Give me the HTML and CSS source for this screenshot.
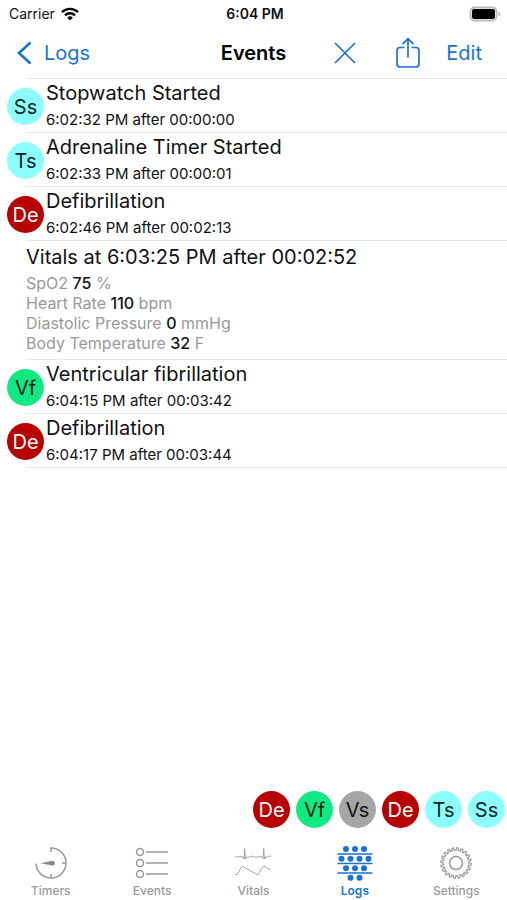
FILE: index.html
```html
<!DOCTYPE html>
<html lang="en">
<head>
<meta charset="utf-8">
<meta name="viewport" content="width=device-width, initial-scale=1">
<title>Events</title>
<link rel="stylesheet" href="styles.css">
</head>
<body>
<div class="status">
  <div class="status-left">
    <span>Carrier</span>
    <svg width="18" height="14" viewBox="0 0 18 14" fill="none" stroke="#000" stroke-width="2.4"><path d="M1 5.2a11.3 11.3 0 0 1 16 0"/><path d="M4 8.3a7 7 0 0 1 10 0"/><path d="M9 13.6 6.2 10.7a4 4 0 0 1 5.6 0z" fill="#000" stroke="none"/></svg>
  </div>
  <time class="status-time">6:04 PM</time>
  <svg class="battery" width="32" height="16" viewBox="0 0 32 16"><rect x="1.5" y="1.5" width="26" height="13" rx="4" fill="#fff" stroke="#bcbcbc" stroke-width="1.8"/><rect x="3" y="3" width="23" height="10" rx="2" fill="#000"/><path d="M29.4 5.5q1.800.8 1.800 2.500t-1.800 2.500z" fill="#bcbcbc"/></svg>
</div>
<header class="nav">
  <a class="back" href="#logs">
    <svg width="16" height="24" viewBox="0 0 16 24" fill="none" stroke="currentColor" stroke-width="2.6"><path d="M14.500 1.500 3 12l11.500 10.500"/></svg>
    <span>Logs</span>
  </a>
  <h1>Events</h1>
  <div class="actions">
    <button type="button" class="close" aria-label="Close"><svg width="22" height="22" viewBox="0 0 22 22" fill="none" stroke="currentColor" stroke-width="1.7"><path d="M1 1l20 20M21 1 1 21"/></svg></button>
    <button type="button" aria-label="Share"><svg width="26" height="32" viewBox="0 0 26 32" fill="none" stroke="currentColor" stroke-width="1.7"><path d="M9.5 10.5H5a3 3 0 0 0-3 3V27a3 3 0 0 0 3 3h16a3 3 0 0 0 3-3V13.5a3 3 0 0 0-3-3h-4.500M13 20.500V2M7.500 7.200 13 1.700l5.500 5.500"/></svg></button>
    <button type="button">Edit</button>
  </div>
</header>
<main>
  <ul class="log">
    <li class="event"><span class="badge cyan">Ss</span><div><h2>Stopwatch Started</h2><p>6:02:32 PM after 00:00:00</p></div></li>
    <li class="event"><span class="badge cyan">Ts</span><div><h2>Adrenaline Timer Started</h2><p>6:02:33 PM after 00:00:01</p></div></li>
    <li class="event"><span class="badge red">De</span><div><h2>Defibrillation</h2><p>6:02:46 PM after 00:02:13</p></div></li>
    <li class="vitals">
      <h2>Vitals at 6:03:25 PM after 00:02:52</h2>
      <p>SpO2 <b>75</b> %</p>
      <p>Heart Rate <b>110</b> bpm</p>
      <p>Diastolic Pressure <b>0</b> mmHg</p>
      <p>Body Temperature <b>32</b> F</p>
    </li>
    <li class="event"><span class="badge green">Vf</span><div><h2>Ventricular fibrillation</h2><p>6:04:15 PM after 00:03:42</p></div></li>
    <li class="event"><span class="badge red">De</span><div><h2>Defibrillation</h2><p>6:04:17 PM after 00:03:44</p></div></li>
  </ul>
</main>
<div class="quick">
  <button type="button" class="badge red">De</button>
  <button type="button" class="badge green">Vf</button>
  <button type="button" class="badge gray">Vs</button>
  <button type="button" class="badge red">De</button>
  <button type="button" class="badge cyan">Ts</button>
  <button type="button" class="badge cyan">Ss</button>
</div>
<nav class="tabs">
  <a href="#timers">
    <svg width="36" height="36" viewBox="0 0 36 36" fill="none" stroke="currentColor" stroke-width="1.5"><path d="M18 7V3a15 15 0 1 1-15 15.500M33 18h-4M18 33v-4"/><path d="M7.500 18.200 19.500 15.700q2.500.2 2.500 2.400t-2.500 2.400z" fill="#888" stroke="none"/></svg>
    <span>Timers</span>
  </a>
  <a href="#events">
    <svg width="36" height="36" viewBox="0 0 36 36" fill="none" stroke="currentColor" stroke-width="1.5"><circle cx="6" cy="7" r="3.500"/><circle cx="6" cy="18" r="3.500"/><circle cx="6" cy="29" r="3.500"/><path d="M12 7h22M12 18h22M12 29h22"/></svg>
    <span>Events</span>
  </a>
  <a href="#vitals">
    <svg width="36" height="36" viewBox="0 0 36 36" fill="none" stroke="currentColor" stroke-width=".9"><path d="M0 12h3l2-.8 2 .8h1l1 2 .7-10.500L10.500 14l1-2h3l2-1 2 1h5l2-.8 1.500.8 1 2 .7-10.500L29.500 14l1-2h2l2-1 1.500.5"/><path d="M0 29.500h2q1 0 2-3 2-5 3.500-5t3 1.500L22 29.500q1.500.5 2.500-2 2.500-6 4.500-6t3 1.500l4 2"/></svg>
    <span>Vitals</span>
  </a>
  <a href="#logs" class="active" aria-current="page">
    <svg width="36" height="36" viewBox="0 0 36 36" fill="currentColor"><path d="M.5 9h35M.5 18.500h35M.5 28h35" stroke="currentColor" stroke-width="1.300"/><circle cx="9" cy="4" r="3"/><circle cx="18" cy="4" r="3"/><circle cx="27" cy="4" r="3"/><circle cx="4.500" cy="13.700" r="3"/><circle cx="13.500" cy="13.700" r="3"/><circle cx="22.500" cy="13.700" r="3"/><circle cx="31.500" cy="13.700" r="3"/><circle cx="9" cy="23.200" r="3"/><circle cx="18" cy="23.200" r="3"/><circle cx="27" cy="23.200" r="3"/><circle cx="13.500" cy="32.800" r="3"/><circle cx="22.500" cy="32.800" r="3"/></svg>
    <span>Logs</span>
  </a>
  <a href="#settings">
    <svg width="36" height="36" viewBox="0 0 36 36" fill="none" stroke="currentColor"><circle cx="18" cy="18" r="14" stroke-width="3.600" pathLength="200" stroke-dasharray="6.500 3.500"/><circle cx="18" cy="18" r="13" stroke-width="1.500"/><circle cx="18" cy="18" r="13.200" stroke="#fff" stroke-width="2.600" pathLength="200" stroke-dasharray="2.500 7.500" stroke-dashoffset="-2"/><circle cx="18" cy="18" r="6.500" stroke-width="1.500"/></svg>
    <span>Settings</span>
  </a>
</nav>
</body>
</html>
```
FILE: styles.css
```css
* { box-sizing: border-box; }

body {
  margin: 0;
  min-height: 100vh;
  display: flex;
  flex-direction: column;
  background: #fff;
  color: #111;
  font-family: Inter, "Liberation Sans", sans-serif;
}

h1, h2, p, ul { margin: 0; padding: 0; }
ul { list-style: none; }
a { color: inherit; text-decoration: none; }

button {
  padding: 0;
  border: 0;
  background: none;
  color: inherit;
  font: inherit;
}

svg { display: block; }

.status {
  display: grid;
  grid-template-columns: 1fr auto 1fr;
  align-items: center;
  height: 27px;
  padding: 0 6px 0 9px;
  font-size: 14px;
}

.status-left {
  display: flex;
  align-items: center;
  gap: 6px;
}

.status-time { font-weight: 600; }
.battery { justify-self: end; }

.nav {
  display: grid;
  grid-template-columns: 1fr auto 1fr;
  align-items: center;
  height: 51px;
  padding: 0 16px;
  color: #1a73d2;
  font-size: 20px;
}

.nav h1 {
  color: #000;
  font-size: 20px;
  font-weight: 600;
}

.back {
  display: flex;
  align-items: center;
  gap: 12px;
}

.actions {
  display: flex;
  justify-content: flex-end;
  align-items: center;
  gap: 25px;
  padding-right: 9px;
}

.close { margin-right: 14px; }

main { flex: 1; }

.log::before,
.log li::after {
  content: "";
  display: block;
  height: 1px;
  margin-left: 26px;
  background: #e8e8e8;
}

.event {
  display: grid;
  grid-template-columns: auto 1fr;
  column-gap: 2px;
  align-items: center;
}

.event .badge { margin: 2px 0 0 7px; }
.event::after { grid-column: 1 / -1; }

.log h2 {
  font-size: 20px;
  font-weight: 400;
  line-height: 28px;
}

.event p {
  font-size: 15px;
  line-height: 25px;
}

.vitals h2,
.vitals p { padding-left: 26px; }

.vitals { padding-top: 2px; }
.vitals h2 { margin-bottom: 2px; }
.vitals::after { margin-top: 6px; }

.vitals p {
  color: #999;
  font-size: 16px;
  line-height: 20px;
}

.vitals b {
  color: #111;
  font-weight: 500;
}

.badge {
  display: flex;
  justify-content: center;
  align-items: center;
  width: 37px;
  height: 37px;
  border-radius: 50%;
  font-size: 20px;
}

.cyan { background: #8cfffd; color: #0b2424; }
.green { background: #12e982; color: #062414; }
.gray { background: #a6a6a6; color: #111; }
.red { background: #b80000; color: #fff; }

.quick {
  display: flex;
  justify-content: flex-end;
  gap: 6px;
  padding: 0 2px 17px;
}

.tabs {
  display: grid;
  grid-template-columns: repeat(5, 1fr);
  height: 55px;
  color: #999;
  font-size: 12px;
  font-weight: 500;
  line-height: 16px;
}

.tabs a {
  display: flex;
  flex-direction: column;
  align-items: center;
  gap: 2px;
}

.tabs .active { color: #1a73d2; font-weight: 600; }
```
